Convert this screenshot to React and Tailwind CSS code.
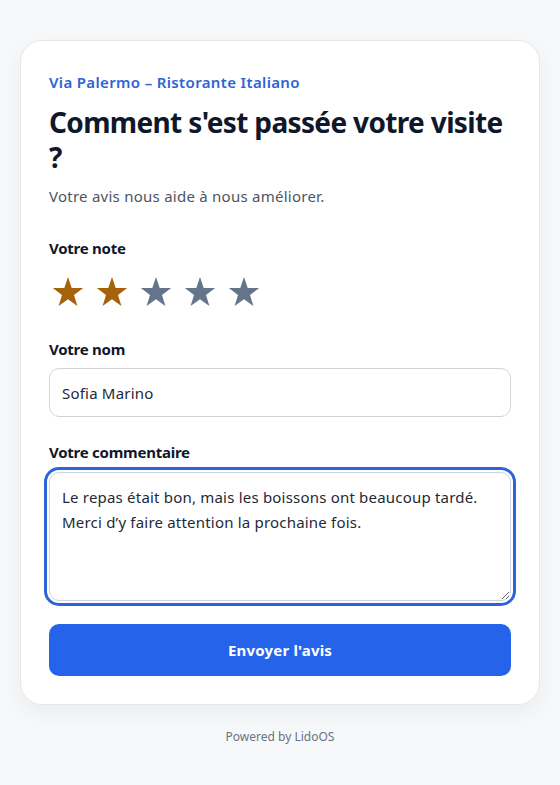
import React, { useState } from 'react';

const font = { fontFamily: '"Noto Sans", "Open Sans", sans-serif' };

const Star = ({ filled }) => (
  <svg width="32" height="32" viewBox="0 0 32 32" aria-hidden="true">
    <polygon
      points="16,1 19.7,11.9 31.2,12.1 22,19 25.4,29.9 16,23.3 6.6,29.9 10,19 0.8,12.1 12.3,11.9"
      fill={filled ? '#a5620a' : '#64748b'}
    />
  </svg>
);

const App = () => {
  const [rating, setRating] = useState(2);
  const [name, setName] = useState('Sofia Marino');
  const [comment, setComment] = useState(
    'Le repas était bon, mais les boissons ont beaucoup tardé. Merci d’y faire attention la prochaine fois.'
  );

  return (
    <div className="min-h-screen bg-[#f6f8fa] px-5 pt-10 pb-10" style={font}>
      <div className="rounded-[22px] border border-[#e5e7eb] bg-white px-[28px] pt-[31px] pb-7 shadow-[0_8px_24px_rgba(15,23,42,0.05)]">
        <p className="text-[15px] leading-5 font-semibold tracking-[0.35px] text-[#2d64d6]">Via Palermo – Ristorante Italiano</p>
        <h1 className="mt-[13px] text-[28px] leading-[35px] font-bold text-[#0f172a] tracking-[-0.65px]">
          Comment s'est passée votre visite ?
        </h1>
        <p className="mt-[9px] text-[15px] leading-6 tracking-[0.25px] text-[#4b5563]">Votre avis nous aide à nous améliorer.</p>

        <form className="mt-[30px]" onSubmit={(e) => e.preventDefault()}>
          <label className="block text-[15px] leading-5 font-bold tracking-[-0.25px] text-[#0f172a]">Votre note</label>
          <div className="mt-[18px] ml-[3px] flex gap-3">
            {[1, 2, 3, 4, 5].map((n) => (
              <button
                key={n}
                type="button"
                onClick={() => setRating(n)}
                className="h-8 w-8 p-0"
                aria-label={`${n} étoiles`}
              >
                <Star filled={n <= rating} />
              </button>
            ))}
          </div>

          <label htmlFor="name" className="mt-[31px] block text-[15px] leading-5 font-bold tracking-[-0.25px] text-[#0f172a]">
            Votre nom
          </label>
          <input
            id="name"
            value={name}
            onChange={(e) => setName(e.target.value)}
            className="mt-[9px] block h-[49px] w-full rounded-[10px] border border-[#d1d5db] px-3 text-[15px] tracking-[0.2px] text-[#1f2937] outline-none"
          />

          <label htmlFor="comment" className="mt-[25px] block text-[15px] leading-5 font-bold tracking-[-0.25px] text-[#0f172a]">
            Votre commentaire
          </label>
          <textarea
            id="comment"
            value={comment}
            onChange={(e) => setComment(e.target.value)}
            className="mt-[10px] block h-[129px] w-full rounded-[10px] border border-[#cbd5e1] px-3 pt-[12px] text-[15px] leading-[25px] tracking-[0.2px] text-[#1f2937] outline-[3px] outline-offset-[2px] outline-solid outline-[#2d64d6]"
          />

          <button
            type="submit"
            className="mt-[23px] h-[52px] w-full rounded-[10px] bg-[#2563eb] text-[15px] font-bold tracking-[0.2px] text-white"
          >
            Envoyer l'avis
          </button>
        </form>
      </div>
      <p className="mt-6 text-center text-[12px] leading-4 text-[#6b7280]">Powered by LidoOS</p>
    </div>
  );
};

export default App;
